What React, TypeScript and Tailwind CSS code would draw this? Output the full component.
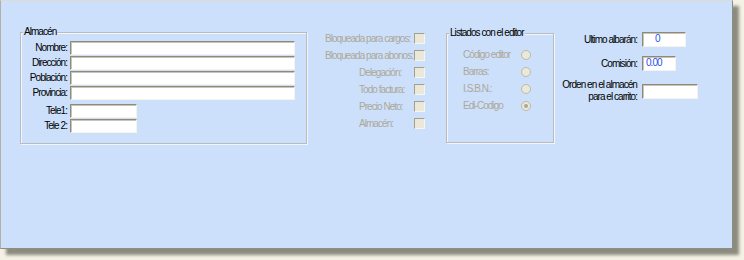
import React from "react";

const fieldCls =
  "h-[14px] bg-white border border-t-[#8d8a7c] border-l-[#8d8a7c] border-r-[#f4f3ec] border-b-[#f4f3ec] shadow-[inset_1px_1px_0_#c8c5b6]";

const almacenRows = ["Nombre:", "Dirección:", "Población:", "Provincia:"];

const checks = [
  { label: "Bloqueada para cargos:", indent: false },
  { label: "Bloqueada para abonos:", indent: false },
  { label: "Delegación:", indent: true },
  { label: "Todo factura:", indent: true },
  { label: "Precio Neto:", indent: true },
  { label: "Almacén:", indent: true },
];

const radios = [
  { label: "Código editor", checked: false },
  { label: "Barras:", checked: false },
  { label: "I.S.B.N.:", checked: false },
  { label: "Edi-Codigo", checked: true },
];

const GroupBox = ({
  title,
  className,
  children,
}: {
  title: string;
  className: string;
  children: React.ReactNode;
}) => (
  <div
    className={`relative border border-[#b9bcbf] shadow-[inset_1px_1px_0_#f2f6fc,1px_1px_0_#f2f6fc] ${className}`}
  >
    <span className="absolute -top-[7px] left-[2px] whitespace-nowrap bg-[#cce0fc] px-[1px] leading-[12px] text-black">
      {title}
    </span>
    {children}
  </div>
);

const CheckBox = () => (
  <span className="block h-[11px] w-[11px] shrink-0 border border-t-[#a3a092] border-l-[#a3a092] border-r-[#f6f5ee] border-b-[#f6f5ee] bg-[#ebe8d7]" />
);

const Radio = ({ checked }: { checked: boolean }) => (
  <span className="flex h-[10px] w-[10px] shrink-0 items-center justify-center rounded-full border border-[#bdb9a8] bg-[#ebe8d7]">
    {checked && <span className="h-[4px] w-[4px] rounded-full bg-[#a9a697]" />}
  </span>
);

export default function App() {
  return (
    <div className="min-h-screen bg-[#f3f2e4] font-['Liberation_Sans',Arial,sans-serif] text-[10px] leading-[12px] tracking-[-0.95px] text-black">
      <div className="flex h-[249px] w-[733px] items-start border border-t-[#dedbd0] border-l-[#b2b0a6] border-r-[#8f8d84] border-b-[#8f8d84] bg-[#cce0fc] shadow-[6px_6px_3px_rgba(70,70,60,0.6)]">
        {/* Almacén */}
        <GroupBox title="Almacén" className="ml-[19px] mt-[31px] h-[112px] w-[287px] pt-[8px]">
          <div className="flex flex-col gap-[1px]">
            {almacenRows.map((l) => (
              <div key={l} className="flex items-center gap-[3px]">
                <span className="w-[46px] whitespace-nowrap text-right">{l}</span>
                <div className={`${fieldCls} w-[225px]`} />
              </div>
            ))}
          </div>
          <div className="mt-[4px] flex flex-col gap-[1px]">
            {["Tele1:", "Tele 2:"].map((l) => (
              <div key={l} className="flex items-center gap-[3px]">
                <span className="w-[46px] whitespace-nowrap text-right">{l}</span>
                <div className={`${fieldCls} w-[67px]`} />
              </div>
            ))}
          </div>
        </GroupBox>

        {/* Flags */}
        <div className="ml-[18px] mt-[29px] flex flex-col text-[#aca899]">
          {checks.map((c) => (
            <div key={c.label} className="flex h-[17px] items-center">
              <span className={`w-[89px] whitespace-nowrap ${c.indent ? "pl-[34px]" : ""}`}>{c.label}</span>
              <CheckBox />
            </div>
          ))}
        </div>

        {/* Listados */}
        <GroupBox title="Listados con el editor" className="ml-[21px] mt-[32px] h-[110px] w-[108px] pt-[12px]">
          <div className="flex flex-col pl-[16px] text-[#aca899]">
            {radios.map((r) => (
              <div key={r.label} className="flex h-[17px] items-center">
                <span className="w-[58px] whitespace-nowrap">{r.label}</span>
                <Radio checked={r.checked} />
              </div>
            ))}
          </div>
        </GroupBox>

        {/* Right column */}
        <div className="ml-[4px] mt-[31px] flex flex-col">
          <div className="flex items-center gap-[5px]">
            <span className="w-[79px] whitespace-nowrap text-right">Ultimo albarán:</span>
            <div className={`${fieldCls} h-[15px] w-[44px] pl-[12px] text-[#1f4fe8]`}>0</div>
          </div>
          <div className="mt-[9px] flex items-center gap-[5px]">
            <span className="w-[79px] whitespace-nowrap text-right">Comisión:</span>
            <div className={`${fieldCls} h-[15px] w-[34px] pl-[3px] text-[#1f4fe8]`}>0.00</div>
          </div>
          <div className="mt-[8px] flex items-center gap-[5px]">
            <span className="w-[79px] whitespace-nowrap text-right">
              Orden en el almacén
              <br />
              para el carrito:
            </span>
            <div className={`${fieldCls} h-[15px] w-[56px]`} />
          </div>
        </div>
      </div>
    </div>
  );
}
